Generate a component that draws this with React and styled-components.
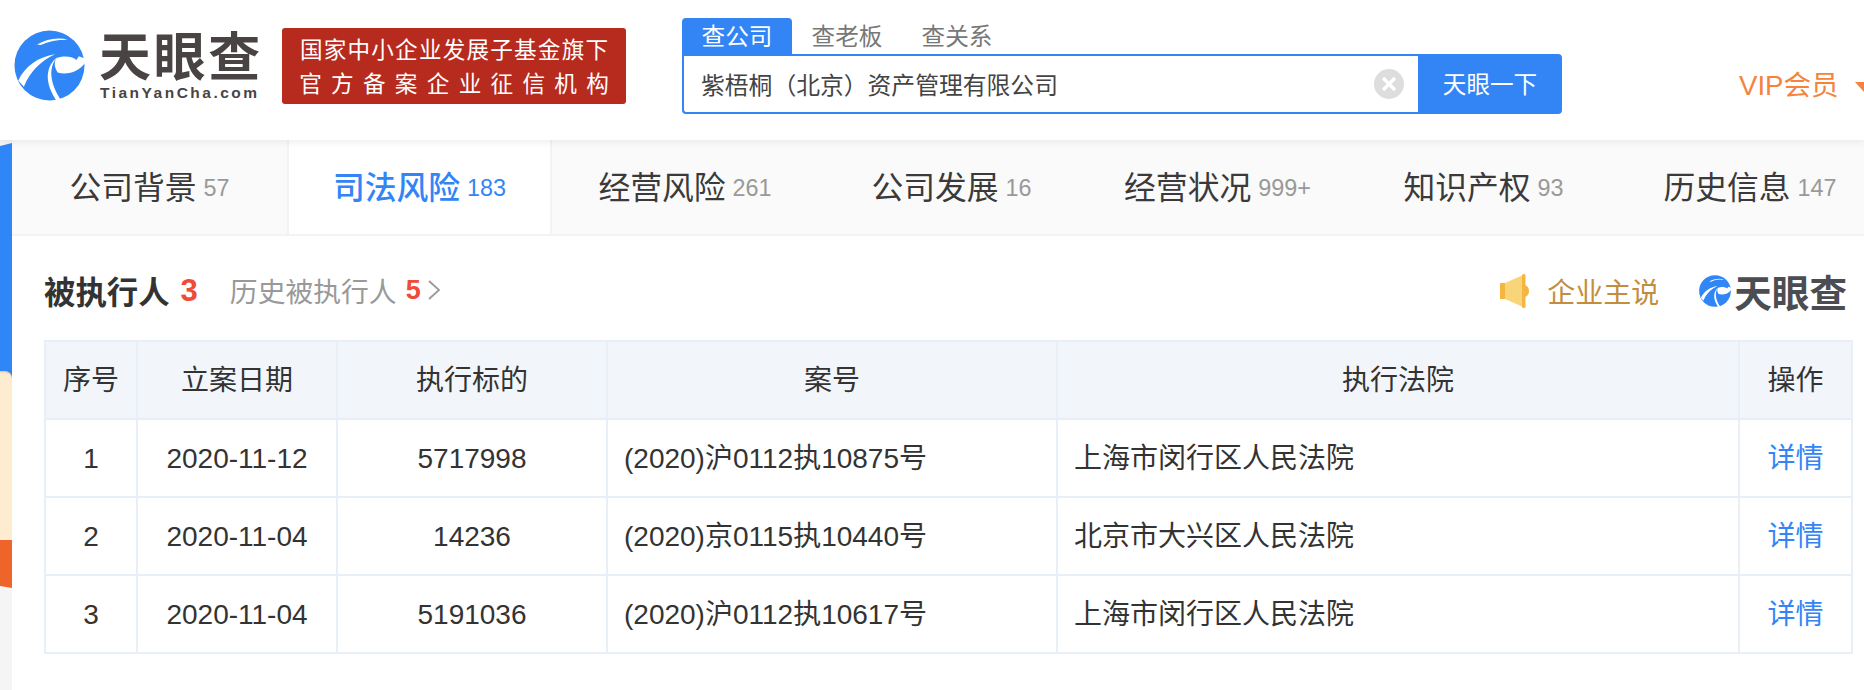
import React from "react";
import styled, { createGlobalStyle } from "styled-components";

const CJK = `"Noto Sans CJK SC", "Liberation Sans", sans-serif`;
const MIXED = `"Liberation Sans", "Noto Sans CJK SC", sans-serif`;

const Global = createGlobalStyle`
  html, body { margin: 0; padding: 0; background: #fff; }
  body { width: 1864px; height: 690px; overflow: hidden; font-family: ${MIXED}; color: #333; }
`;

const Page = styled.div`
  width: 1864px;
  height: 690px;
  display: flex;
  flex-direction: column;
  overflow: hidden;
`;

const Header = styled.header`
  position: relative;
  z-index: 2;
  flex: 0 0 140px;
  display: flex;
  align-items: flex-start;
  padding: 18px 0 0 12px;
  box-sizing: border-box;
  background: #fff;
  box-shadow: 0 1px 8px rgba(0, 0, 0, 0.09);
`;

const LogoMark = styled.svg`
  flex: none;
  width: ${(p) => p.$size}px;
  height: ${(p) => p.$size}px;
  margin-top: ${(p) => p.$top || 0}px;
`;

const Wordmark = styled.div`
  width: 159px;
  margin: 10px 0 0 12px;
  display: flex;
  flex-direction: column;
  color: #494443;
`;

const WordmarkCn = styled.div`
  font: 700 52px/52px ${CJK};
  letter-spacing: 2.6px;
  white-space: nowrap;
`;

const WordmarkEn = styled.div`
  margin: 5px 0 0 1px;
  font: 700 15.5px/15px "Liberation Sans", sans-serif;
  letter-spacing: 2.5px;
  white-space: nowrap;
`;

const RedBadge = styled.div`
  flex: none;
  width: 344px;
  height: 76px;
  margin: 10px 56px 0 24px;
  border-radius: 3px;
  background: #b72a1e;
  color: #fff;
  display: flex;
  flex-direction: column;
  align-items: center;
  justify-content: center;
  font: 400 22.6px/34px ${CJK};
`;

const BadgeLine = styled.div`
  letter-spacing: ${(p) => p.$spacing}px;
  margin-right: ${(p) => -p.$spacing}px;
  white-space: nowrap;
`;

const Search = styled.div`
  flex: none;
  width: 880px;
`;

const SearchTabs = styled.div`
  display: flex;
  height: 36px;
`;

const SearchTab = styled.div`
  width: 110px;
  text-align: center;
  font: 400 23.6px/34px ${CJK};
  border-radius: 4px 4px 0 0;
  color: ${(p) => (p.$active ? "#fff" : "#777")};
  background: ${(p) => (p.$active ? "#3385f6" : "transparent")};
`;

const SearchBox = styled.div`
  display: flex;
  height: 60px;
`;

const InputArea = styled.div`
  flex: 1;
  display: flex;
  align-items: center;
  justify-content: space-between;
  box-sizing: border-box;
  padding: 0 14px 0 17px;
  border: 2px solid #3385f6;
  border-right: 0;
  border-radius: 0 0 0 4px;
  font: 400 23.8px/1 ${CJK};
  color: #444;
`;

const ClearIcon = styled.svg`
  width: 30px;
  height: 30px;
  flex: none;
`;

const SearchButton = styled.div`
  flex: 0 0 144px;
  display: flex;
  align-items: center;
  justify-content: center;
  background: #3385f6;
  color: #fff;
  font: 400 23.6px/1 ${CJK};
  border-radius: 0 4px 4px 0;
`;

const Vip = styled.div`
  margin: 51px 0 0 177px;
  display: flex;
  align-items: center;
  white-space: nowrap;
  color: #f4843c;
  font: 400 27.6px/34px ${MIXED};
`;

const Caret = styled.span`
  flex: none;
  width: 0;
  height: 0;
  margin: 2px 0 0 16px;
  border-left: 10px solid transparent;
  border-right: 10px solid transparent;
  border-top: 11px solid #f4843c;
`;

const Body = styled.div`
  flex: 1;
  display: flex;
  min-height: 0;
`;

const Rail = styled.aside`
  flex: 0 0 12px;
  display: flex;
  flex-direction: column;
  padding-top: 3px;
  background: #f5f5f5;
`;

const RailBlue = styled.div`
  flex: 0 0 228px;
  background: #3086f6;
  clip-path: polygon(0 3px, 100% 0, 100% 100%, 0 100%);
`;

const RailCream = styled.div`
  flex: 0 0 169px;
  background: #3086f6;
  &::before {
    content: "";
    display: block;
    height: 100%;
    background: #fdecd0;
    border-radius: 0 7px 0 0;
    box-shadow: inset 0 3px 2px -2px rgba(120, 90, 40, 0.3);
  }
`;

const RailOrange = styled.div`
  flex: 0 0 48px;
  background: #ee642a;
  clip-path: polygon(0 0, 100% 0, 100% 100%, 0 calc(100% - 2px));
`;

const Main = styled.main`
  flex: 1;
  min-width: 0;
  background: #fff;
`;

const Tabs = styled.nav`
  display: flex;
  height: 96px;
  box-sizing: border-box;
  border-bottom: 2px solid #f3f3f3;
  overflow: hidden;
`;

const Tab = styled.div`
  flex: 0 0 ${(p) => p.$width}px;
  box-sizing: border-box;
  display: flex;
  align-items: center;
  justify-content: center;
  white-space: nowrap;
  padding-bottom: 2px;
  background: ${(p) => (p.$active ? "#fff" : "#fafafa")};
  border-left: ${(p) => (p.$active ? "2px solid #f3f3f3" : "0")};
  border-right: ${(p) => (p.$active ? "2px solid #f3f3f3" : "0")};
`;

const TabLabel = styled.span`
  font: ${(p) => (p.$active ? 500 : 400)} 31.8px/1 ${CJK};
  color: ${(p) => (p.$active ? "#3385f6" : "#3a3a3a")};
`;

const TabCount = styled.span`
  margin: 6px 0 0 7px;
  font: 400 23.4px/1 "Liberation Sans", sans-serif;
  color: ${(p) => (p.$active ? "#3385f6" : "#999")};
`;

const Content = styled.section`
  padding: 0 0 0 32px;
`;

const TitleRow = styled.div`
  height: 104px;
  box-sizing: border-box;
  padding-top: 5px;
  padding-right: 17px;
  display: flex;
  align-items: center;
`;

const Title = styled.h2`
  margin: 0;
  font: 700 31.4px/1 ${CJK};
  color: #333;
`;

const RedCount = styled.span`
  color: #f04b37;
  font: 700 ${(p) => p.$size}px/1 "Liberation Sans", sans-serif;
  margin-left: ${(p) => p.$gap}px;
`;

const HistoryLink = styled.div`
  margin-left: 32px;
  display: flex;
  align-items: center;
  font: 400 27.8px/1 ${CJK};
  color: #999;
`;

const Chevron = styled.svg`
  width: 14px;
  height: 20px;
  margin-left: 6px;
`;

const Claim = styled.div`
  margin-left: auto;
  display: flex;
  align-items: center;
  font: 400 28px/1 ${CJK};
  color: #c28e3e;
`;

const Megaphone = styled.svg`
  width: 32px;
  height: 34px;
  margin-right: 15px;
`;

const SmallBrand = styled.div`
  margin-left: 39px;
  display: flex;
  align-items: center;
`;

const SmallWordmark = styled.span`
  margin-left: 2px;
  font: 700 37.6px/1 ${CJK};
  color: #4b4d52;
`;

const Table = styled.table`
  width: 1807px;
  table-layout: fixed;
  border-collapse: collapse;
  font: 400 28px/1 ${MIXED};
  color: #333;
`;

const Th = styled.th`
  height: 74px;
  padding: 2px 0 0;
  border: 2px solid #e8eff6;
  background: #f2f6fb;
  font-weight: 400;
  text-align: center;
`;

const Td = styled.td`
  height: 75px;
  padding: ${(p) => (p.$left ? "1px 0 0 16px" : "1px 0 0")};
  border: 2px solid #e8eff6;
  text-align: ${(p) => (p.$left ? "left" : "center")};
`;

const DetailLink = styled.a`
  color: #3385f6;
`;

const Logo = ({ size, top }) => (
  <LogoMark $size={size} $top={top} viewBox="0 0 240 240" aria-hidden="true">
    <circle cx="120" cy="120" r="112" fill="#3086f6" />
    <path d="M80 53C112 34 148 28 182 38C150 37 118 43 92 54Z" fill="#fff" />
    <path d="M20 168C42 122 84 92 138 84C94 104 58 138 38 188Z" fill="#fff" />
    <path d="M146 92C120 120 114 168 160 236L146 238C102 176 106 124 146 92Z" fill="#fff" />
    <path d="M140 98C162 88 190 90 206 102L214 90L240 100L233 113C214 140 176 152 146 142C136 128 134 112 140 98Z" fill="#fff" />
  </LogoMark>
);

const tabs = [
  { label: "公司背景", count: "57", width: 275 },
  { label: "司法风险", count: "183", width: 265, active: true },
  { label: "经营风险", count: "261", width: 266 },
  { label: "公司发展", count: "16", width: 267 },
  { label: "经营状况", count: "999+", width: 265 },
  { label: "知识产权", count: "93", width: 267 },
  { label: "历史信息", count: "147", width: 266 },
];

const rows = [
  ["1", "2020-11-12", "5717998", "(2020)沪0112执10875号", "上海市闵行区人民法院"],
  ["2", "2020-11-04", "14236", "(2020)京0115执10440号", "北京市大兴区人民法院"],
  ["3", "2020-11-04", "5191036", "(2020)沪0112执10617号", "上海市闵行区人民法院"],
];

const widths = [92, 200, 270, 450, 682, 113];

export default function App() {
  return (
    <Page>
      <Global />
      <Header>
        <Logo size={75} top={10} />
        <Wordmark>
          <WordmarkCn>天眼查</WordmarkCn>
          <WordmarkEn>TianYanCha.com</WordmarkEn>
        </Wordmark>
        <RedBadge>
          <BadgeLine $spacing={1.2}>国家中小企业发展子基金旗下</BadgeLine>
          <BadgeLine $spacing={9.3}>官方备案企业征信机构</BadgeLine>
        </RedBadge>
        <Search>
          <SearchTabs>
            <SearchTab $active>查公司</SearchTab>
            <SearchTab>查老板</SearchTab>
            <SearchTab>查关系</SearchTab>
          </SearchTabs>
          <SearchBox>
            <InputArea>
              <span>紫梧桐（北京）资产管理有限公司</span>
              <ClearIcon viewBox="0 0 30 30" aria-hidden="true">
                <circle cx="15" cy="15" r="15" fill="#ddd" />
                <path d="M9 9l12 12M21 9L9 21" stroke="#fff" strokeWidth="3.4" />
              </ClearIcon>
            </InputArea>
            <SearchButton>天眼一下</SearchButton>
          </SearchBox>
        </Search>
        <Vip>
          VIP会员
          <Caret />
        </Vip>
      </Header>
      <Body>
        <Rail>
          <RailBlue />
          <RailCream />
          <RailOrange />
        </Rail>
        <Main>
          <Tabs>
            {tabs.map((t) => (
              <Tab key={t.label} $width={t.width} $active={t.active}>
                <TabLabel $active={t.active}>{t.label}</TabLabel>
                <TabCount $active={t.active}>{t.count}</TabCount>
              </Tab>
            ))}
          </Tabs>
          <Content>
            <TitleRow>
              <Title>被执行人</Title>
              <RedCount $size={31} $gap={11}>3</RedCount>
              <HistoryLink>
                历史被执行人
                <RedCount $size={27} $gap={9}>5</RedCount>
                <Chevron viewBox="0 0 14 20" aria-hidden="true">
                  <path d="M2 1l10 9-10 9" fill="none" stroke="#999" strokeWidth="1.8" />
                </Chevron>
              </HistoryLink>
              <Claim>
                <Megaphone viewBox="0 0 32 34" aria-hidden="true">
                  <rect x="0" y="9" width="6" height="16" fill="#f5b641" />
                  <path d="M5 9L23 1V33L5 25Z" fill="#f9d57a" />
                  <rect x="22" y="0" width="3.5" height="34" rx="1.5" fill="#f5b641" />
                  <path d="M25 11a6.5 6.5 0 0 1 0 12Z" fill="#f5b641" />
                </Megaphone>
                企业主说
                <SmallBrand>
                  <Logo size={34} />
                  <SmallWordmark>天眼查</SmallWordmark>
                </SmallBrand>
              </Claim>
            </TitleRow>
            <Table>
              <colgroup>
                {widths.map((w, i) => (
                  <col key={i} width={w} />
                ))}
              </colgroup>
              <thead>
                <tr>
                  <Th>序号</Th>
                  <Th>立案日期</Th>
                  <Th>执行标的</Th>
                  <Th>案号</Th>
                  <Th>执行法院</Th>
                  <Th>操作</Th>
                </tr>
              </thead>
              <tbody>
                {rows.map((r) => (
                  <tr key={r[0]}>
                    <Td>{r[0]}</Td>
                    <Td>{r[1]}</Td>
                    <Td>{r[2]}</Td>
                    <Td $left>{r[3]}</Td>
                    <Td $left>{r[4]}</Td>
                    <Td>
                      <DetailLink>详情</DetailLink>
                    </Td>
                  </tr>
                ))}
              </tbody>
            </Table>
          </Content>
        </Main>
      </Body>
    </Page>
  );
}
